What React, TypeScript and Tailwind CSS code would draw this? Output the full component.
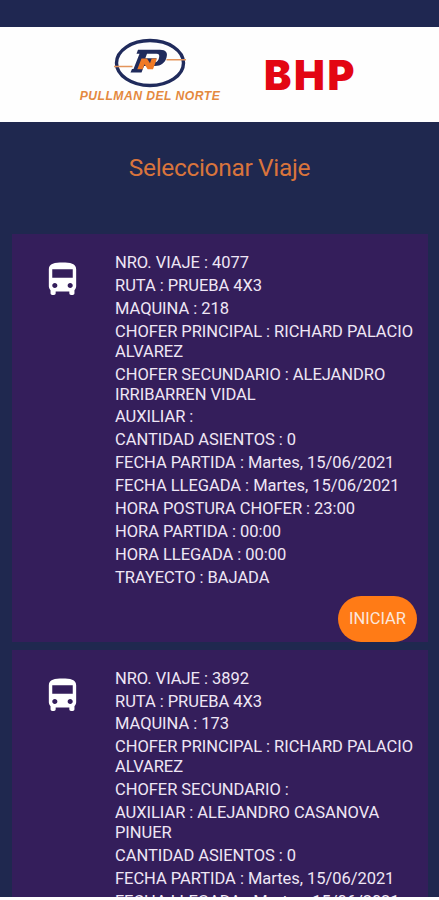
import { MdDirectionsBus } from "react-icons/md";

type Trip = { lines: string[]; button?: boolean };

const trips: Trip[] = [
  {
    lines: [
      "NRO. VIAJE : 4077",
      "RUTA : PRUEBA 4X3",
      "MAQUINA : 218",
      "CHOFER PRINCIPAL : RICHARD PALACIO ALVAREZ",
      "CHOFER SECUNDARIO : ALEJANDRO IRRIBARREN VIDAL",
      "AUXILIAR :",
      "CANTIDAD ASIENTOS : 0",
      "FECHA PARTIDA : Martes, 15/06/2021",
      "FECHA LLEGADA : Martes, 15/06/2021",
      "HORA POSTURA CHOFER : 23:00",
      "HORA PARTIDA : 00:00",
      "HORA LLEGADA : 00:00",
      "TRAYECTO : BAJADA",
    ],
    button: true,
  },
  {
    lines: [
      "NRO. VIAJE : 3892",
      "RUTA : PRUEBA 4X3",
      "MAQUINA : 173",
      "CHOFER PRINCIPAL : RICHARD PALACIO ALVAREZ",
      "CHOFER SECUNDARIO :",
      "AUXILIAR : ALEJANDRO CASANOVA PINUER",
      "CANTIDAD ASIENTOS : 0",
      "FECHA PARTIDA : Martes, 15/06/2021",
      "FECHA LLEGADA : Martes, 15/06/2021",
    ],
  },
];

function PullmanLogo() {
  return (
    <div className="flex w-[142px] flex-col items-center">
      <svg width="72" height="50" viewBox="0 0 72 50">
        <ellipse cx="36" cy="25" rx="33.5" ry="22.5" fill="none" stroke="#202b5c" strokeWidth="3.4" />
        <path d="M0 28.500H18.500M52.500 21.800H72" stroke="#e3955c" strokeWidth="1.5" />
        <path
          fillRule="evenodd"
          fill="#202b5c"
          d="M24 11.800H46C52 11.800 54 15 52.500 19.500C51 25 47 28 41 28H30L27.500 34.500H16.500L18 31H19.500L25.500 15.800H22.500ZM33 15.800L31.300 20.300H42.500L41 24.300C43 24.300 44.300 22.500 45 20C45.800 17 45 15.800 42.500 15.800Z"
        />
        <path fill="#f07a26" d="M27.500 20.500H33L36 25.300L37.700 20.500H43L39 31.200H33.700L30.500 26.300L28.600 31.200H23.300Z" />
      </svg>
      <span className="mt-px whitespace-nowrap font-['Liberation_Sans',sans-serif] text-[12.200px] leading-[15px] font-bold tracking-[0.450px] italic text-[#e4893f]">
        PULLMAN DEL NORTE
      </span>
    </div>
  );
}

function TripCard({ lines, button }: Trip) {
  return (
    <section className="flex shrink-0 flex-col bg-[#341e5b] pt-[19px]">
      <div className="flex">
        <div className="w-[103px] shrink-0 pt-[6px] pl-[30px]">
          <MdDirectionsBus size={41} className="text-white" />
        </div>
        <div className="flex flex-1 flex-col gap-[2.900px] text-[16.500px] leading-[20px] tracking-[-0.040px] text-[#efe6f5]">
          {lines.map((line) => (
            <p key={line}>{line}</p>
          ))}
        </div>
      </div>
      {button && (
        <button className="mt-[8px] mr-[11px] h-[46px] w-[79px] self-end rounded-full bg-[#ff7b16] pt-[2px] text-[16.500px] text-[#fbe6dc]">
          INICIAR
        </button>
      )}
    </section>
  );
}

export default function App() {
  return (
    <div className="flex h-[900px] w-[439px] flex-col bg-white font-[Roboto,sans-serif]">
      <div className="h-[27px] shrink-0 bg-[#1f2751]" />
      <header className="flex h-[95px] shrink-0 bg-[#fefefe] pt-[11px] pl-[79px]">
        <PullmanLogo />
        <span className="mt-[15px] ml-[43px] font-[Inter,sans-serif] text-[41px] leading-[44px] font-black tracking-[2.700px] text-[#e30613]">
          BHP
        </span>
      </header>
      <main className="flex h-[775px] shrink-0 flex-col overflow-hidden bg-[#1f284f]">
        <h1 className="shrink-0 pt-[31px] text-center text-[24.500px] leading-[30px] tracking-[-0.340px] text-[#d9743c]">
          Seleccionar Viaje
        </h1>
        <div className="mt-[51px] flex flex-col gap-[8px] pr-[11px] pl-[12px]">
          {trips.map((trip) => (
            <TripCard key={trip.lines[0]} {...trip} />
          ))}
        </div>
      </main>
    </div>
  );
}
